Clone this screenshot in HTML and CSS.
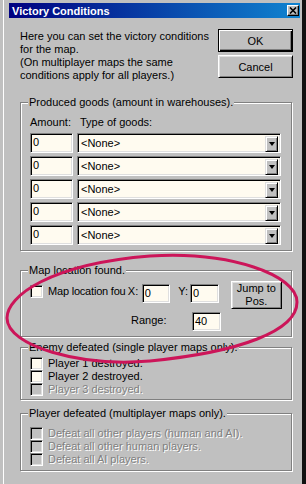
FILE: index.html
```html
<!DOCTYPE html>
<html lang="en">
<head>
    <meta charset="UTF-8">
    <title>Victory Conditions</title>
    <link rel="stylesheet" href="styles.css">
</head>
<body>
    <div class="window">
        <div class="titlebar">
            <span class="title">Victory Conditions</span>
            <span class="close">
                <svg width="8" height="7" viewBox="0 0 8 7"><path d="M1 0.5 L7 6.5 M7 0.5 L1 6.5" stroke="#000" stroke-width="1.6"/></svg>
            </span>
        </div>

        <div class="client">
            <div class="intro-row">
                <p class="intro">Here you can set the victory conditions<br>for the map.<br>(On multiplayer maps the same<br>conditions apply for all players.)</p>
                <div class="actions">
                    <button class="btn default">OK</button>
                    <button class="btn">Cancel</button>
                </div>
            </div>

            <div class="group goods">
                <div class="legend">Produced goods (amount in warehouses).</div>
                <div class="goods-head">
                    <span class="col-amount">Amount:</span>
                    <span>Type of goods:</span>
                </div>
                <div class="goods-row"><div class="field amount">0</div><div class="combo"><span>&lt;None&gt;</span><span class="drop"><i class="arrow"></i></span></div></div>
                <div class="goods-row"><div class="field amount">0</div><div class="combo"><span>&lt;None&gt;</span><span class="drop"><i class="arrow"></i></span></div></div>
                <div class="goods-row"><div class="field amount">0</div><div class="combo"><span>&lt;None&gt;</span><span class="drop"><i class="arrow"></i></span></div></div>
                <div class="goods-row"><div class="field amount">0</div><div class="combo"><span>&lt;None&gt;</span><span class="drop"><i class="arrow"></i></span></div></div>
                <div class="goods-row"><div class="field amount">0</div><div class="combo"><span>&lt;None&gt;</span><span class="drop"><i class="arrow"></i></span></div></div>
            </div>

            <div class="group location">
                <div class="legend">Map location found.</div>
                <div class="map-row">
                    <span class="box map-box"></span>
                    <span class="map-label">Map location fou</span>
                    <span class="coord-label">X:</span>
                    <div class="field small">0</div>
                    <span class="coord-label y-label">Y:</span>
                    <div class="field small">0</div>
                    <button class="btn jump">Jump to<br>Pos.</button>
                </div>
                <div class="range-row">
                    <span class="range-label">Range:</span>
                    <div class="field small">40</div>
                </div>
            </div>

            <div class="group enemy">
                <div class="legend">Enemy defeated (single player maps only).</div>
                <div class="check-list">
                    <div class="check"><span class="box"></span>Player 1 destroyed.</div>
                    <div class="check"><span class="box"></span>Player 2 destroyed.</div>
                    <div class="check disabled"><span class="box"></span>Player 3 destroyed.</div>
                </div>
            </div>

            <div class="group players">
                <div class="legend">Player defeated (multiplayer maps only).</div>
                <div class="check-list">
                    <div class="check disabled"><span class="box"></span>Defeat all other players (human and AI).</div>
                    <div class="check disabled"><span class="box"></span>Defeat all other human players.</div>
                    <div class="check disabled"><span class="box"></span>Defeat all AI players.</div>
                </div>
            </div>
        </div>

        <!-- hand drawn red marker over the dialog -->
        <svg class="marker" width="306" height="484" viewBox="0 0 306 484">
            <path d="M7 318 C7 296 50 264 150 256 C230 251 297 275 297 302 C297 331 240 352 150 361 C80 367 7 346 7 318 Z" fill="none" stroke="#cc1559" stroke-width="3"/>
        </svg>
    </div>
</body>
</html>
```

FILE: styles.css
```css
body {
    margin: 0;
    background: #c0c0c0;
    font-family: 'Liberation Sans', Arial, sans-serif;
    font-size: 11px;
    color: #000;
}

.window {
    position: relative;
    width: 306px;
    height: 484px;
    box-sizing: border-box;
    padding: 3px 2px 0 9px;
    background: #c0c0c0;
    border-right: 4px solid #111;
    box-shadow: inset 3px 0 0 #c0c0c0, inset 4px 0 0 #fff;
    overflow: hidden;
}

.titlebar {
    display: flex;
    align-items: center;
    justify-content: space-between;
    height: 15px;
    padding: 0 1px 0 3px;
    background: linear-gradient(to right, #000080, #1084d0);
    color: #fff;
    font-weight: bold;
}

.close {
    display: flex;
    align-items: center;
    justify-content: center;
    width: 12px;
    height: 11px;
    box-sizing: border-box;
    background: #c0c0c0;
    border: 1px solid;
    border-color: #fff #000 #000 #fff;
    box-shadow: inset -1px -1px 0 #808080;
}

.client {
    padding: 0 8px 0 11px;
}

.intro-row {
    display: flex;
    justify-content: space-between;
    margin-top: 11px;
}
.intro {
    margin: 0;
    padding-top: 1px;
    line-height: 13px;
}
.actions {
    display: flex;
    flex-direction: column;
    gap: 3px;
    margin-right: -1px;
}

.btn {
    width: 75px;
    height: 23px;
    box-sizing: border-box;
    padding: 0;
    font: inherit;
    color: #000;
    background: #c0c0c0;
    border: 1px solid;
    border-color: #fff #000 #000 #fff;
    box-shadow: inset 1px 1px 0 #dfdfdf, inset -1px -1px 0 #808080;
}
.btn.default {
    border-color: #000;
    box-shadow: inset 1px 1px 0 #fff, inset -1px -1px 0 #000, inset -2px -2px 0 #808080;
}

.group {
    border: 1px solid #808080;
    box-shadow: inset 1px 1px 0 #fff, 1px 1px 0 #fff;
    padding: 0 9px 5px 9px;
}
.legend {
    display: table;
    margin: -7px 0 0 -2px;
    padding: 0 1px;
    background: #c0c0c0;
    line-height: 13px;
}

.field, .combo, .box {
    box-sizing: border-box;
    background: #fffbf0;
    border: 1px solid;
    border-color: #808080 #fff #fff #808080;
    box-shadow: inset 1px 1px 0 #000, inset -1px -1px 0 #dfdfdf;
}
.field {
    height: 20px;
    padding: 1px 0 0 2px;
    line-height: 14px;
}
.field.small {
    width: 29px;
    height: 19px;
}

/* produced goods */
.goods { margin-top: 20px; }
.goods-head {
    display: flex;
    margin-top: 7px;
    line-height: 13px;
}
.col-amount { width: 50px; }
.goods-row {
    display: flex;
    gap: 4px;
    margin-top: 3px;
}
.goods-head + .goods-row { margin-top: 4px; }
.amount { width: 43px; }
.combo {
    display: flex;
    justify-content: space-between;
    width: 204px;
    height: 20px;
    padding: 2px 2px 2px 3px;
    line-height: 15px;
}
.drop {
    display: flex;
    align-items: center;
    justify-content: center;
    width: 13px;
    height: 16px;
    box-sizing: border-box;
    background: #c0c0c0;
    border: 1px solid;
    border-color: #dfdfdf #000 #000 #dfdfdf;
    box-shadow: inset 1px 1px 0 #fff, inset -1px -1px 0 #808080;
}
.arrow {
    width: 0;
    height: 0;
    border-left: 3.5px solid transparent;
    border-right: 3.5px solid transparent;
    border-top: 4px solid #000;
}

/* map location */
.location { margin-top: 19px; }
.map-row {
    display: flex;
    align-items: flex-start;
    margin-top: 4px;
    line-height: 13px;
}
.box {
    flex: none;
    width: 13px;
    height: 13px;
}
.map-box { margin-top: 4px; }
.map-label {
    width: 81px;
    margin: 4px 0 0 5px;
    letter-spacing: -0.2px;
    white-space: nowrap;
    overflow: hidden;
}
.coord-label {
    width: 14px;
    margin-top: 4px;
}
.y-label {
    width: 12px;
    margin-left: 8px;
}
.map-row .field { margin-top: 3px; }
.btn.jump {
    width: 52px;
    height: 28px;
    margin-left: 12px;
    line-height: 13px;
}
.range-row {
    display: flex;
    margin-top: 3px;
}
.range-label {
    width: 61px;
    margin: 2px 0 0 101px;
    line-height: 13px;
}

/* checkbox lists */
.enemy { margin-top: 10px; padding-bottom: 3px; }
.enemy .check-list { margin-top: 3px; }
.players { margin-top: 13px; padding-bottom: 4px; }
.players .check-list { margin-top: 7px; }
.check {
    display: flex;
    align-items: center;
    gap: 5px;
    height: 13px;
    line-height: 13px;
    white-space: nowrap;
}
.check.disabled {
    color: #808080;
    text-shadow: 1px 1px 0 #fff;
}
.check.disabled .box { background: #c0c0c0; }

.marker {
    position: absolute;
    top: 0;
    left: 0;
    pointer-events: none;
}
```
